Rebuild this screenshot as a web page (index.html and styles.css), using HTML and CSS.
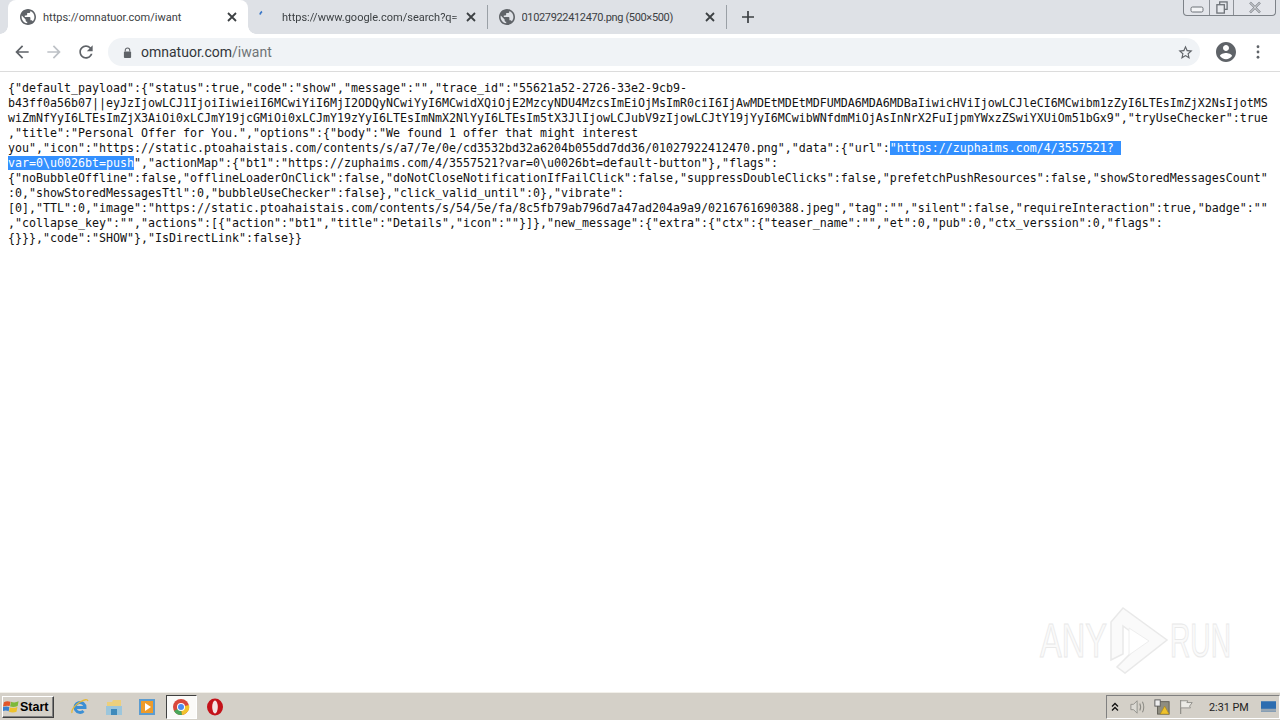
FILE: index.html
```html
<!DOCTYPE html>
<html lang="en">
<head>
<meta charset="utf-8">
<title>omnatuor.com/iwant</title>
<link rel="stylesheet" href="styles.css">
</head>
<body>
<svg class="defs" width="0" height="0">
  <symbol id="globe" viewBox="2 2 20 20"><path d="M12 2C6.48 2 2 6.48 2 12s4.48 10 10 10 10-4.48 10-10S17.52 2 12 2zm-1 17.93c-3.95-.49-7-3.85-7-7.93 0-.62.08-1.21.21-1.79L9 15v1c0 1.1.9 2 2 2v1.93zm6.9-2.54c-.26-.81-1-1.39-1.9-1.39h-1v-3c0-.55-.45-1-1-1H8v-2h2c.55 0 1-.45 1-1V7h2c1.1 0 2-.9 2-2v-.41c2.93 1.19 5 4.06 5 7.41 0 2.08-.8 3.97-2.1 5.39z"/></symbol>
  <symbol id="close" viewBox="0 0 10 10"><path d="M1 1l8 8M9 1l-8 8" fill="none" stroke="currentColor" stroke-width="1.8"/></symbol>
</svg>
<div class="window">
  <header class="tabstrip">
    <div class="tab active">
      <svg class="favicon"><use href="#globe"/></svg>
      <span class="tab-title">https://omnatuor.com/iwant</span>
      <svg class="tab-close"><use href="#close"/></svg>
    </div>
    <div class="tab sep spin">
      <svg class="favicon" viewBox="0 0 16 16"><path d="M5 5.500Q5.500 3.500 7 2.500" fill="none" stroke="#3b78c8" stroke-width="1.800"/></svg>
      <span class="tab-title fade">https://www.google.com/search?q=</span>
      <svg class="tab-close"><use href="#close"/></svg>
    </div>
    <div class="tab sep">
      <svg class="favicon"><use href="#globe"/></svg>
      <span class="tab-title tight">01027922412470.png (500×500)</span>
      <svg class="tab-close"><use href="#close"/></svg>
    </div>
    <svg class="newtab" viewBox="0 0 12 12"><path d="M6 0v12M0 6h12" fill="none" stroke="#3c4043" stroke-width="1.700"/></svg>
    <div class="winctl">
      <div class="wc wc-min"><svg viewBox="0 0 14 8" class="wc-i"><rect x="1" y="1" width="12" height="5" rx="1.500" fill="#f3f4f6" stroke="#6d7278"/></svg></div>
      <div class="wc wc-max"><svg viewBox="0 0 14 14" class="wc-i2"><rect x="4.500" y="1" width="8" height="8" fill="none" stroke="#6d7278" stroke-width="1.400"/><rect x="1.500" y="4" width="8" height="9" fill="#e8eaee" stroke="#6d7278" stroke-width="1.400"/></svg></div>
      <div class="wc wc-close"><svg viewBox="0 0 14 12" class="wc-i2"><path d="M2 1l10 10M12 1L2 11" fill="none" stroke="#777c82" stroke-width="2.400"/><path d="M2 1l10 10M12 1L2 11" fill="none" stroke="#f2f3f5" stroke-width="1"/></svg></div>
    </div>
  </header>
  <nav class="toolbar">
    <svg class="tool back" viewBox="0 0 24 24"><path d="M20 11H7.830l5.590-5.590L12 4l-8 8 8 8 1.410-1.410L7.830 13H20v-2z"/></svg>
    <svg class="tool fwd" viewBox="0 0 24 24"><path d="M12 4l-1.410 1.410L16.170 11H4v2h12.170l-5.580 5.590L12 20l8-8z"/></svg>
    <svg class="tool reload" viewBox="0 0 24 24"><path d="M17.650 6.350C16.200 4.900 14.210 4 12 4c-4.420 0-7.990 3.580-7.990 8s3.570 8 7.990 8c3.730 0 6.840-2.550 7.730-6h-2.080c-.82 2.330-3.040 4-5.650 4-3.310 0-6-2.690-6-6s2.690-6 6-6c1.660 0 3.140.69 4.220 1.780L13 11h7V4l-2.350 2.350z"/></svg>
    <div class="omnibox">
      <svg class="lock" viewBox="0 0 10 12"><path d="M2.500 5V3.500a2.500 2.500 0 0 1 5 0V5" fill="none" stroke="#5f6368" stroke-width="1.200"/><rect x="1" y="5" width="8" height="7" rx="1" fill="#5f6368"/></svg>
      <span class="url">omnatuor.com<span class="url-path">/iwant</span></span>
      <svg class="star" viewBox="0 0 24 24"><path d="M22 9.240l-7.190-.62L12 2 9.190 8.630 2 9.240l5.460 4.730L5.820 21 12 17.270 18.180 21l-1.630-7.030L22 9.240zM12 15.400l-3.760 2.270 1-4.280-3.320-2.880 4.380-.38L12 6.100l1.710 4.040 4.380.38-3.320 2.880 1 4.280L12 15.400z"/></svg>
    </div>
    <svg class="avatar" viewBox="2 2 20 20"><path d="M12 2C6.480 2 2 6.480 2 12s4.480 10 10 10 10-4.480 10-10S17.520 2 12 2zm0 3c1.660 0 3 1.340 3 3s-1.340 3-3 3-3-1.340-3-3 1.340-3 3-3zm0 14.200c-2.500 0-4.710-1.280-6-3.220.03-1.990 4-3.080 6-3.080 1.990 0 5.970 1.090 6 3.080-1.290 1.940-3.500 3.220-6 3.220z"/></svg>
    <svg class="dots" viewBox="0 0 4 16"><circle cx="2" cy="2" r="1.600"/><circle cx="2" cy="8" r="1.600"/><circle cx="2" cy="14" r="1.600"/></svg>
  </nav>
  <main class="page">
<pre class="json">{"default_payload":{"status":true,"code":"show","message":"","trace_id":"55621a52-2726-33e2-9cb9-b43ff0a56b07||eyJzIjowLCJ1IjoiIiwieiI6MCwiYiI6MjI2ODQyNCwiYyI6MCwidXQiOjE2MzcyNDU4MzcsImEiOjMsImR0ciI6IjAwMDEtMDEtMDFUMDA6MDA6MDBaIiwicHViIjowLCJleCI6MCwibm1zZyI6LTEsImZjX2NsIjotMSwiZmNfYyI6LTEsImZjX3AiOi0xLCJmY19jcGMiOi0xLCJmY19zYyI6LTEsImNmX2NlYyI6LTEsIm5tX3JlIjowLCJubV9zIjowLCJtY19jYyI6MCwibWNfdmMiOjAsInNrX2FuIjpmYWxzZSwiYXUiOm51bGx9","tryUseChecker":true,"title":"Personal Offer for You.","options":{"body":"We found 1 offer that might interest you","icon":"https://static.ptoahaistais.com/contents/s/a7/7e/0e/cd3532bd32a6204b055dd7dd36/01027922412470.png","data":{"url":<span class="sel">"https://zuphaims.com/4/3557521?&nbsp;<wbr>var=0\u0026bt=push</span>","actionMap":{"bt1":"https://zuphaims.com/4/3557521?var=0\u0026bt=default-button"},"flags":{"noBubbleOffline":false,"offlineLoaderOnClick":false,"doNotCloseNotificationIfFailClick":false,"suppressDoubleClicks":false,"prefetchPushResources":false,"showStoredMessagesCount":0,"showStoredMessagesTtl":0,"bubbleUseChecker":false},"click_valid_until":0},"vibrate":[0],"TTL":0,"image":"https://static.ptoahaistais.com/contents/s/54/5e/fa/8c5fb79ab796d7a47ad204a9a9/0216761690388.jpeg","tag":"","silent":false,"requireInteraction":true,"badge":"","collapse_key":"","actions":[{"action":"bt1","title":"Details","icon":""}]},"new_message":{"extra":{"ctx":{"teaser_name":"","et":0,"pub":0,"ctx_verssion":0,"flags":{}}},"code":"SHOW"},"IsDirectLink":false}}</pre>
    <svg class="watermark" viewBox="0 0 196 70">
      <text x="3" y="51" class="wm-text" textLength="67" lengthAdjust="spacingAndGlyphs">ANY</text>
      <path d="M74 54V16L86 2l44 32-42 33-8-6 26-26-20-15v28z" fill="#fafafa" stroke="#e9e9e9" stroke-width="1.500"/>
      <path d="M92 22l20 13-20 14z" fill="#fff" stroke="#eeeeee"/>
      <text x="133" y="51" class="wm-text" textLength="61" lengthAdjust="spacingAndGlyphs">RUN</text>
    </svg>
  </main>
  <footer class="taskbar">
    <div class="start">
      <svg class="start-logo" viewBox="0 0 18 16"><path d="M1 3q3-2 7-.5L7 7Q4 6 0 7.500z" fill="#e2562a"/><path d="M8.500 2.500q4 1.500 8-.5l-1 5q-4 1.500-8 .5z" fill="#7db93a"/><path d="M0 8q3.500-1 6.700 0L6 12.500q-3-1.500-7 0z" fill="#3a80cf"/><path d="M7.300 8.500q4 1 8-.5l-1 5q-4 1.500-8 0z" fill="#eec22c"/></svg>
      <span>Start</span>
    </div>
    <div class="quick">
      <svg class="qi" viewBox="0 0 18 18"><path d="M4 9.500h10a5 5 0 1 0-1.500 3.500" fill="none" stroke="#3c8fd4" stroke-width="3"/><path d="M1 15Q0 10 9 4q7-4 8-1" fill="none" stroke="#e5b93a" stroke-width="1.300"/></svg>
      <svg class="qi" viewBox="0 0 18 18"><path d="M2 4h5l1-2h8v14H2z" fill="#eccf7c"/><path d="M1 8h16v9H1z" fill="#9cc6dc"/><rect x="6" y="11" width="6" height="6" fill="#3f8abb"/></svg>
      <svg class="qi" viewBox="0 0 18 18"><rect x="1" y="1" width="16" height="16" fill="#5c9cd0"/><rect x="3" y="3" width="12" height="12" fill="#ee9b2a"/><path d="M7 5l6 4-6 4z" fill="#fff"/></svg>
      <div class="q-active">
        <svg class="qi" viewBox="0 0 18 18"><circle cx="9" cy="9" r="8" fill="#d9483b"/><path d="M9 9L2 13a8 8 0 0 0 8 4z" fill="#4aa75a"/><path d="M9 9l8-2a8 8 0 0 1-7 10z" fill="#f2c32c"/><circle cx="9" cy="9" r="4" fill="#fff"/><circle cx="9" cy="9" r="3" fill="#4c8bf0"/></svg>
      </div>
      <svg class="qi" viewBox="0 0 18 18"><ellipse cx="9" cy="9" rx="8" ry="8.500" fill="#c4121a"/><ellipse cx="9" cy="9" rx="2.800" ry="6.500" fill="#f4e4e4"/></svg>
    </div>
    <div class="tray">
      <svg class="tray-up" viewBox="0 0 8 10"><path d="M1 4.500l3-3 3 3M1 8.500l3-3 3 3" fill="none" stroke="#111" stroke-width="1.300"/></svg>
      <svg class="ti" viewBox="0 0 18 16"><path d="M1 5h3l4-4v14l-4-4H1z" fill="#dcdad4" stroke="#8d8c86"/><path d="M11 4q2 4 0 8M14 2q3 6 0 12" fill="none" stroke="#8d8c86" stroke-width="1.200"/></svg>
      <svg class="ti" viewBox="0 0 18 18"><rect x="4" y="3" width="13" height="14" fill="#8f8d80" stroke="#5d5b52"/><rect x="1" y="1" width="6" height="7" fill="#eeeeee" stroke="#555"/><path d="M12 8l5 9H7z" fill="#eec22c" stroke="#a47f10" stroke-width=".6"/></svg>
      <svg class="ti" viewBox="0 0 18 18"><path d="M3 1v16" stroke="#8d8c86" stroke-width="1.300"/><path d="M3 2h8l-1 2h6l-3 4 1 2H3z" fill="#ecebe6" stroke="#8d8c86"/></svg>
      <span class="clock">2:31 PM</span>
      <svg class="ti desk" viewBox="0 0 20 14"><rect width="20" height="14" fill="#2d6db0"/><rect y="10" width="20" height="4" fill="#96a6b4"/></svg>
    </div>
  </footer>
</div>
</body>
</html>
```

FILE: styles.css
```css
* { box-sizing: border-box; }
html, body { margin: 0; height: 100%; }
body { overflow: hidden; background: #fff; font-family: Roboto, "Noto Sans", sans-serif; }
.defs { display: block; height: 0; }

.window { display: flex; flex-direction: column; width: 1280px; height: 720px; }

/* Tab strip */
.tabstrip { display: flex; align-items: stretch; height: 34px; padding-left: 8px; background: #dee1e6; }
.tab { position: relative; display: flex; align-items: center; width: 240px; padding: 0 11px 0 12px; font-size: 11px; color: #3c4043; }
.tab.active { background: #fff; border-radius: 8px 8px 0 0; }
.tab.active::before, .tab.active::after { content: ""; position: absolute; bottom: 0; width: 8px; height: 8px; }
.tab.active::before { left: -8px; background: radial-gradient(circle at 0 0, transparent 7.500px, #fff 8px); }
.tab.active::after { right: -8px; background: radial-gradient(circle at 100% 0, transparent 7.500px, #fff 8px); }
.tab.sep { width: 239.500px; height: 24px; margin-top: 5px; padding-left: 11px; border-right: 1px solid #9aa0a6; }
.favicon { flex: none; width: 16px; height: 16px; margin-right: 7px; fill: #5f6368; }
.tab-title { flex: 1; overflow: hidden; white-space: nowrap; }
.tight { letter-spacing: -0.35px; }
.fade { -webkit-mask-image: linear-gradient(90deg, #000 92%, transparent 100%); mask-image: linear-gradient(90deg, #000 92%, transparent 100%); }
.tab-close { flex: none; width: 10px; height: 10px; color: #3c4043; }
.tab.spin { padding-left: 7px; }
.tab.spin .favicon { margin-right: 11px; }
.newtab { flex: none; width: 12px; height: 12px; margin: 11px 0 0 15px; }
.winctl { display: flex; align-self: flex-start; margin-left: auto; margin-right: 4px; height: 16px; border: 1px solid #7d8288; border-top: 0; border-radius: 0 0 4px 4px; background: #e3e5ea; }
.wc { display: flex; align-items: center; justify-content: center; height: 100%; }
.wc-min { width: 25px; }
.wc-max { width: 25px; border-left: 1px solid #8d9197; border-right: 1px solid #8d9197; }
.wc-close { width: 41px; }
.wc-i { width: 14px; height: 8px; margin-top: 5px; }
.wc-i2 { width: 14px; height: 13px; }

/* Toolbar */
.toolbar { display: flex; align-items: center; height: 38px; padding: 4px 12px 5px 0; background: #fff; border-bottom: 1px solid #dcdcdc; }
.tool { flex: none; width: 20px; height: 20px; fill: #5f6368; }
.back { margin-left: 12px; }
.fwd { margin-left: 12px; fill: #bdc1c6; }
.reload { margin-left: 12px; }
.omnibox { display: flex; align-items: center; flex: none; width: 1092px; height: 28px; margin-left: 12px; padding: 0 6px 0 15px; background: #f0f3f6; border-radius: 14px; }
.lock { flex: none; width: 9px; height: 11px; margin-right: 9px; }
.url { flex: 1; font-size: 14px; color: #33363a; }
.url-path { color: #6f7377; }
.star { flex: none; width: 17px; height: 17px; fill: #5f6368; }
.avatar { flex: none; width: 20px; height: 20px; margin-left: 16px; fill: #5f6368; }
.dots { flex: none; width: 4px; height: 14px; margin-left: 20px; fill: #5f6368; }

/* Page */
.page { position: relative; flex: 1; background: #fff; padding: 9px 8px 8px; overflow: hidden; }
.json { margin: 0; font-family: "DejaVu Sans Mono", "Liberation Mono", monospace; font-size: 11.630px; line-height: 15px; color: #111; white-space: pre-wrap; word-wrap: break-word; }
.sel { background: #3390ff; color: #fff; }
.watermark { position: absolute; left: 1037px; top: 534px; width: 196px; height: 70px; overflow: visible; }
.wm-text { font-family: "Liberation Sans", sans-serif; font-size: 47.500px; fill: #fafafa; stroke: #e9e9e9; stroke-width: 1; }

/* Taskbar */
.taskbar { display: flex; align-items: center; height: 28px; padding-left: 2px; background: #d4d0c8; border-top: 1px solid #f2f0ea; }
.start { display: flex; align-items: center; width: 52px; height: 22px; background: #d4d0c8; border: 1px solid; border-color: #fff #404040 #404040 #fff; box-shadow: inset -1px -1px 0 #808080; font-family: "Liberation Sans", sans-serif; font-weight: 700; font-size: 12.500px; color: #000; }
.start-logo { flex: none; width: 17px; height: 16px; }
.quick { display: flex; align-items: center; margin-left: 17px; }
.qi { flex: none; width: 18px; height: 18px; margin-right: 15.500px; }
.q-active { display: flex; align-items: center; justify-content: center; width: 31px; height: 24px; margin: 0 9px 0 -6px; background: #fbfaf8; border: 1px solid; border-color: #404040 #fff #fff #404040; }
.q-active .qi { margin: 0; }
.tray { display: flex; align-items: center; margin-left: auto; width: 174px; height: 24px; padding-left: 4px; border: 1px solid; border-color: #808080 #fff #fff #808080; }
.tray-up { flex: none; width: 8px; height: 10px; }
.ti { flex: none; width: 16px; height: 16px; margin-left: 8px; }
.tray-up + .ti { margin-left: 11px; }
.clock { flex: none; margin: 1px 0 0 15px; font-size: 10.800px; color: #222; white-space: nowrap; }
.desk { width: 15px; height: 11px; margin-left: 12px; }
```
